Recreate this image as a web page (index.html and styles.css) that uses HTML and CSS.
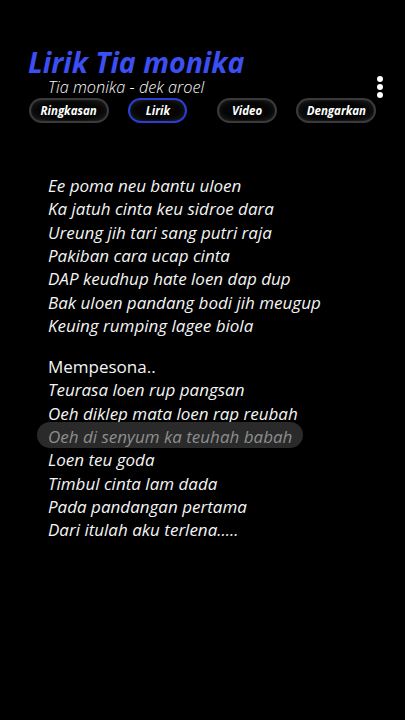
FILE: index.html
```html
<!DOCTYPE html>
<html lang="id">
<head>
<meta charset="utf-8">
<meta name="viewport" content="width=device-width, initial-scale=1">
<title>Lirik Tia monika</title>
<link rel="stylesheet" href="styles.css">
</head>
<body>
<div class="screen">
  <header class="header">
    <div class="head-row">
      <div class="titles">
        <h1 class="title">Lirik Tia monika</h1>
        <p class="subtitle">Tia monika - dek aroel</p>
      </div>
      <div class="menu" aria-label="menu">
        <span class="dot"></span><span class="dot"></span><span class="dot"></span>
      </div>
    </div>
    <nav class="tabs">
      <span class="tab">Ringkasan</span>
      <span class="tab tab-active">Lirik</span>
      <span class="tab">Video</span>
      <span class="tab">Dengarkan</span>
    </nav>
  </header>
  <main class="lyrics">
    <div class="stanza">
      <p class="line">Ee poma neu bantu uloen</p>
      <p class="line">Ka jatuh cinta keu sidroe dara</p>
      <p class="line">Ureung jih tari sang putri raja</p>
      <p class="line">Pakiban cara ucap cinta</p>
      <p class="line">DAP keudhup hate loen dap dup</p>
      <p class="line">Bak uloen pandang bodi jih meugup</p>
      <p class="line">Keuing rumping lagee biola</p>
    </div>
    <div class="stanza">
      <p class="line upright">Mempesona..</p>
      <p class="line">Teurasa loen rup pangsan</p>
      <p class="line">Oeh diklep mata loen rap reubah</p>
      <p class="line current">Oeh di senyum ka teuhah babah</p>
      <p class="line">Loen teu goda</p>
      <p class="line">Timbul cinta lam dada</p>
      <p class="line">Pada pandangan pertama</p>
      <p class="line">Dari itulah aku terlena.....</p>
    </div>
  </main>
</div>
</body>
</html>
```
FILE: styles.css
```css
* { box-sizing: border-box; }
html, body { margin: 0; padding: 0; background: #000; }
body {
  font-family: "Open Sans", "Noto Sans", sans-serif;
  color: #fff;
  width: 405px;
  height: 720px;
  overflow: hidden;
}
.screen { padding-top: 47px; }
.header { display: flex; flex-direction: column; }
.head-row {
  display: flex;
  justify-content: space-between;
  align-items: flex-start;
  padding: 0 22px 0 28px;
}
.title {
  margin: 0;
  font-size: 28.5px;
  line-height: 30px;
  font-weight: 700;
  font-style: italic;
  color: #3b4ff2;
}
.subtitle {
  margin: 1px 0 0 20px;
  font-size: 16.3px;
  line-height: 18px;
  font-style: italic;
  font-weight: 300;
  color: #fafafa;
}
.menu {
  display: flex;
  flex-direction: column;
  gap: 2px;
  margin-top: 29px;
}
.dot {
  width: 6px;
  height: 6px;
  border-radius: 50%;
  background: #fff;
}
.tabs {
  display: grid;
  grid-template-columns: repeat(4, 1fr);
  justify-items: center;
  padding: 0 24px;
  margin-top: 0;
}
.tab {
  display: flex;
  align-items: center;
  justify-content: center;
  height: 25px;
  border-radius: 13px;
  border: 2px solid #3a3a3a;
  background: radial-gradient(ellipse at center, #050505 55%, #1c1c1c 100%);
  box-shadow: inset 0 0 3px rgba(255,255,255,0.08);
  font-size: 11.5px;
  font-weight: 700;
  font-style: italic;
  color: #fff;
}
.tab:nth-child(1) { width: 80px; }
.tab:nth-child(2) { width: 59px; }
.tab:nth-child(3) { width: 60px; }
.tab:nth-child(4) { width: 80px; }
.tab-active { border-color: #2b3fd8; }
.lyrics {
  padding: 51px 0 0 48px;
  display: flex;
  flex-direction: column;
  gap: 17.7px;
}
.stanza { display: flex; flex-direction: column; }
.line {
  margin: 0;
  font-size: 17px;
  line-height: 23.33px;
  font-style: italic;
  font-weight: 400;
  color: #f4f4f4;
}
.upright { font-style: normal; }
.current {
  color: #8e8e8e;
  background: #2a2a2a;
  border-radius: 13px;
  margin: -3.4px 0 0.7px -11px;
  padding: 3.4px 0 0 11px;
  height: 26px;
  width: 266px;
}
```
